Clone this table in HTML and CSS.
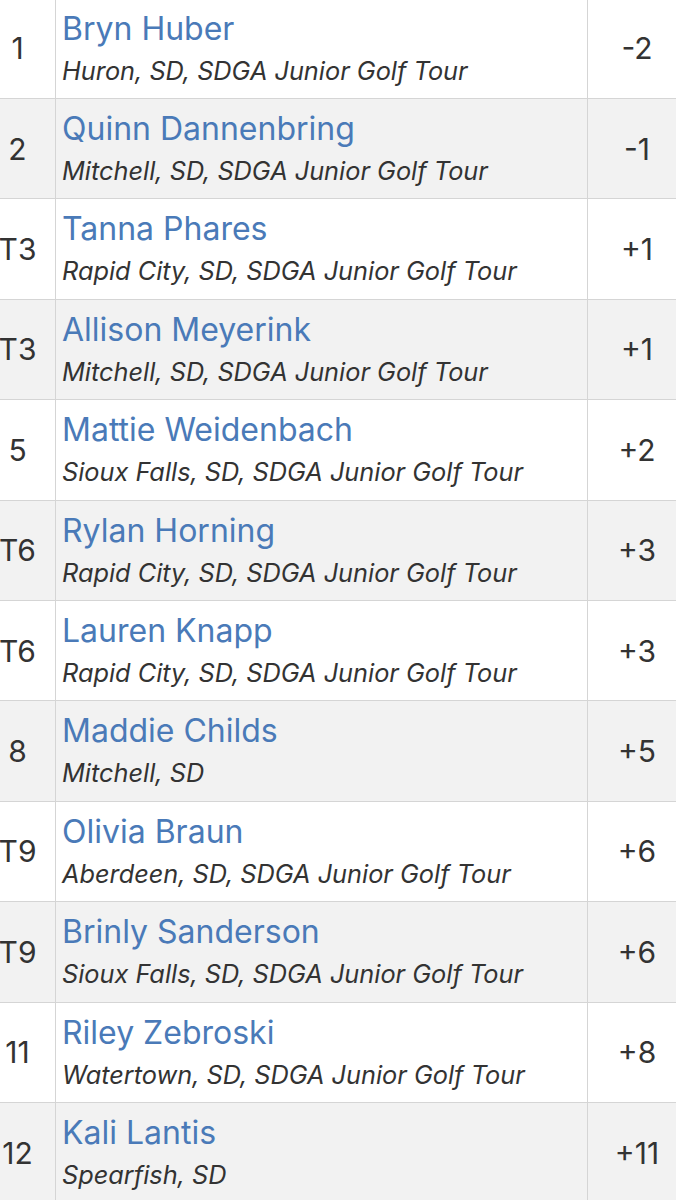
FILE: index.html
```html
<!DOCTYPE html>
<html lang="en">
<head>
<meta charset="utf-8">
<title>Leaderboard</title>
<link rel="stylesheet" href="styles.css">
</head>
<body>
<div class="board">
  <div class="row"><div class="pos">1</div><div class="player"><a class="name">Bryn Huber</a><div class="info">Huron, SD, SDGA Junior Golf Tour</div></div><div class="score">-2</div></div>
  <div class="row"><div class="pos">2</div><div class="player"><a class="name">Quinn Dannenbring</a><div class="info">Mitchell, SD, SDGA Junior Golf Tour</div></div><div class="score">-1</div></div>
  <div class="row"><div class="pos">T3</div><div class="player"><a class="name">Tanna Phares</a><div class="info">Rapid City, SD, SDGA Junior Golf Tour</div></div><div class="score">+1</div></div>
  <div class="row"><div class="pos">T3</div><div class="player"><a class="name">Allison Meyerink</a><div class="info">Mitchell, SD, SDGA Junior Golf Tour</div></div><div class="score">+1</div></div>
  <div class="row"><div class="pos">5</div><div class="player"><a class="name">Mattie Weidenbach</a><div class="info">Sioux Falls, SD, SDGA Junior Golf Tour</div></div><div class="score">+2</div></div>
  <div class="row"><div class="pos">T6</div><div class="player"><a class="name">Rylan Horning</a><div class="info">Rapid City, SD, SDGA Junior Golf Tour</div></div><div class="score">+3</div></div>
  <div class="row"><div class="pos">T6</div><div class="player"><a class="name">Lauren Knapp</a><div class="info">Rapid City, SD, SDGA Junior Golf Tour</div></div><div class="score">+3</div></div>
  <div class="row"><div class="pos">8</div><div class="player"><a class="name">Maddie Childs</a><div class="info">Mitchell, SD</div></div><div class="score">+5</div></div>
  <div class="row"><div class="pos">T9</div><div class="player"><a class="name">Olivia Braun</a><div class="info">Aberdeen, SD, SDGA Junior Golf Tour</div></div><div class="score">+6</div></div>
  <div class="row"><div class="pos">T9</div><div class="player"><a class="name">Brinly Sanderson</a><div class="info">Sioux Falls, SD, SDGA Junior Golf Tour</div></div><div class="score">+6</div></div>
  <div class="row"><div class="pos">11</div><div class="player"><a class="name">Riley Zebroski</a><div class="info">Watertown, SD, SDGA Junior Golf Tour</div></div><div class="score">+8</div></div>
  <div class="row"><div class="pos">12</div><div class="player"><a class="name">Kali Lantis</a><div class="info">Spearfish, SD</div></div><div class="score">+11</div></div>
</div>
</body>
</html>
```
FILE: styles.css
```css
html, body {
  margin: 0;
  padding: 0;
  background: #ffffff;
  overflow: hidden;
}
body {
  font-family: Inter, Lato, Arial, sans-serif;
  color: #333333;
}
.board {
  margin-top: -1.4px;
  display: flex;
  flex-direction: column;
}
.row {
  display: flex;
  height: 100.4px;
  box-sizing: border-box;
  border-bottom: 1px solid #d5d5d5;
}
.row:nth-child(even) {
  background: #f2f2f2;
}
.pos {
  width: 56px;
  box-sizing: border-box;
  padding-right: 20px;
  border-right: 1px solid #d5d5d5;
  display: flex;
  align-items: center;
  justify-content: center;
  font-size: 30px;
  font-weight: 400;
}
.player {
  width: 532px;
  box-sizing: border-box;
  padding: 11px 0 0 6px;
  border-right: 1px solid #d5d5d5;
  display: flex;
  flex-direction: column;
}
.name {
  color: #4a7ab8;
  font-size: 32px;
  line-height: 38px;
  text-decoration: none;
}
.info {
  font-style: italic;
  font-size: 25.3px;
  line-height: 46px;
}
.score {
  flex: 1;
  padding-left: 10px;
  display: flex;
  align-items: center;
  justify-content: center;
  font-size: 30px;
  font-weight: 400;
}
```
